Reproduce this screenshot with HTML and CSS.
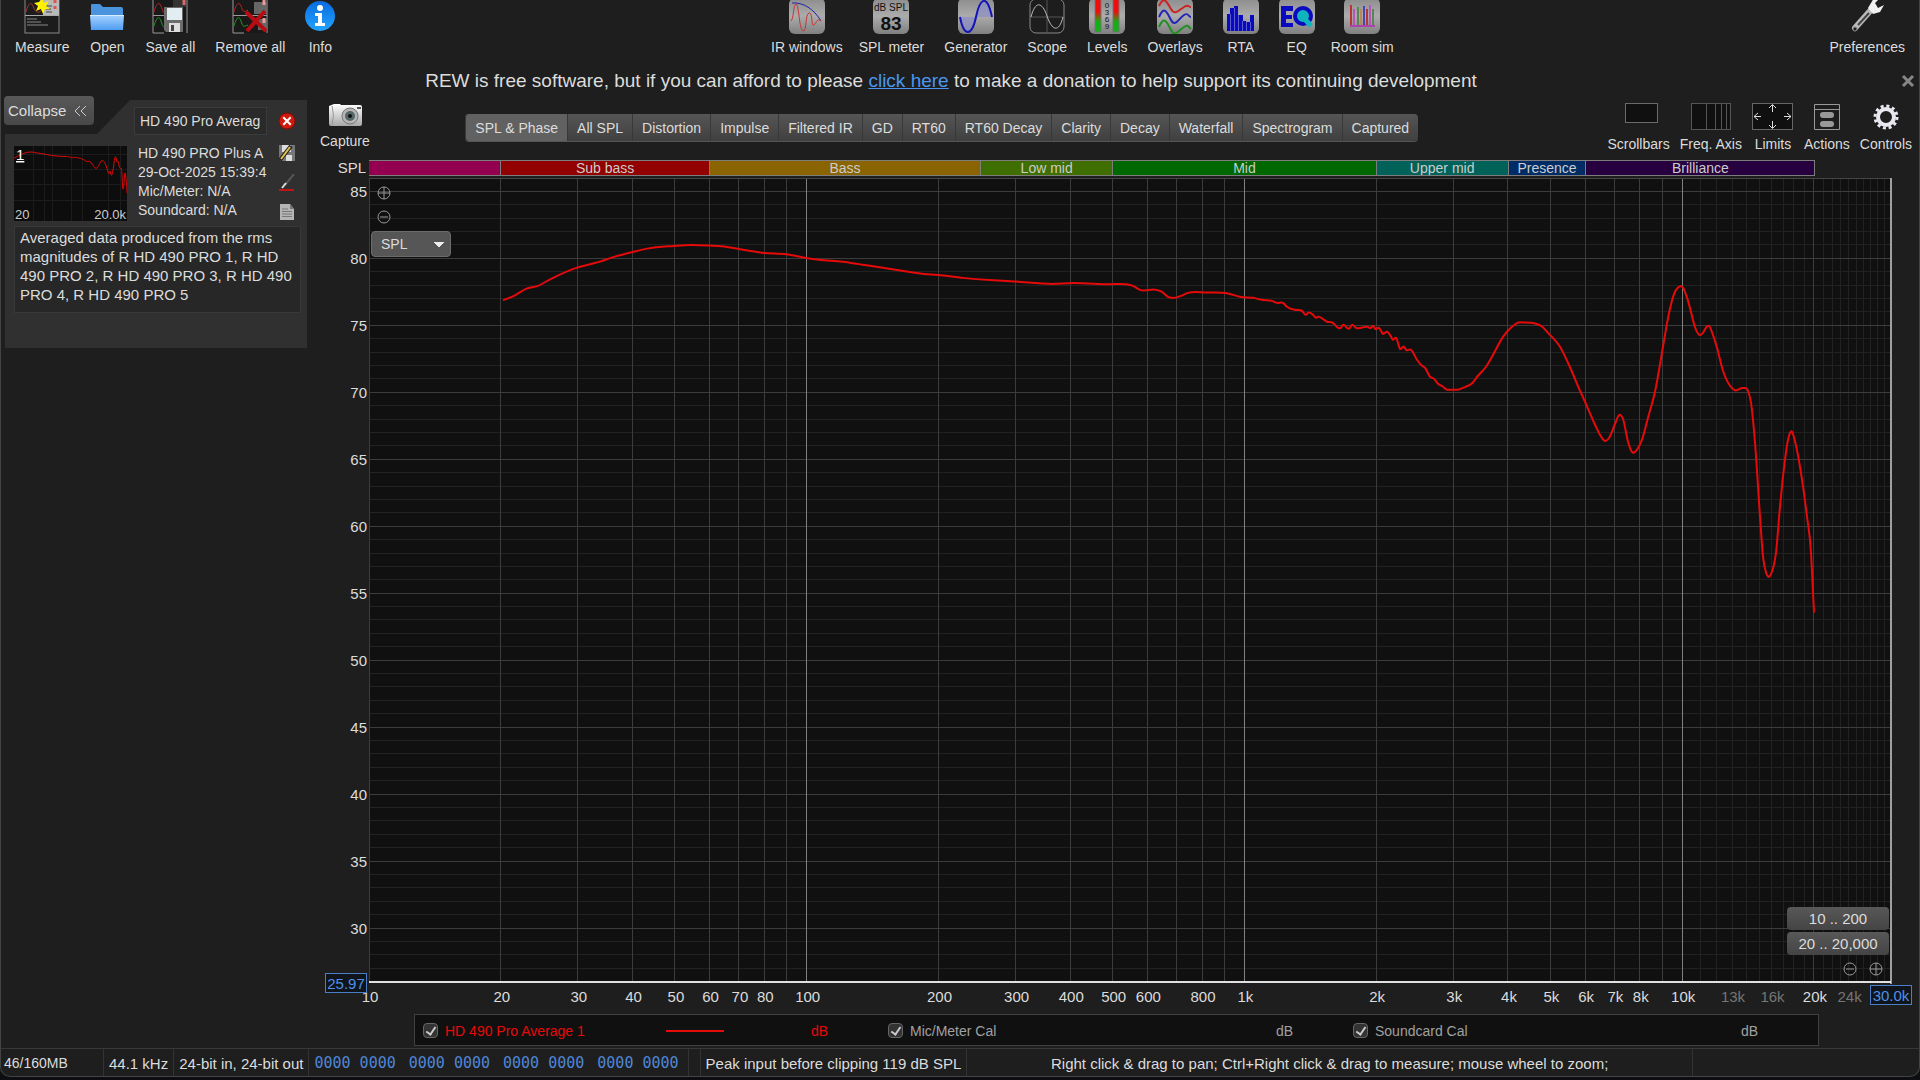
FILE: index.html
```html
<!DOCTYPE html>
<html lang="en">
<head>
    <meta charset="UTF-8">
    <meta name="viewport" content="width=device-width, initial-scale=1.0">
    <title>REW</title>
    <link rel="stylesheet" href="styles.css">
</head>
<body>
    <div class="window">
        <!-- Main toolbar -->
        <header class="toolbar">
            <div class="tool-group">
                <button class="tool">
                    <svg width="36" height="36" viewBox="0 0 36 36">
                        <rect x="1" y="0" width="34" height="35" fill="#1c1c1c" stroke="#888" />
                        <path d="M1 17.500H35" stroke="#aaa" />
                        <rect x="19" y="0" width="16" height="17" fill="#b9b9b9" />
                        <path d="M2 14C4 6 7 3 9 8S13 17 18 12" fill="none" stroke="#a33" />
                        <path d="M22 8h6M22 11h5M22 14h6" stroke="#444" />
                        <path d="M31 0v5M31 8v3" stroke="#d55" stroke-width="3" />
                        <path d="M3 21h10M3 24h14M3 27h21" stroke="#888" />
                        <path d="M18 0l2 5 5-2-3 5 4 3-5 0-2 5-2-5-5 2 2-5-4-3 5-1z" fill="#fff200" />
                    </svg>
                    Measure
                </button>
                <button class="tool">
                    <svg width="36" height="36" viewBox="0 0 36 36">
                        <defs>
                            <linearGradient id="folder" x2="0" y2="1">
                                <stop offset="0" stop-color="#a6d3ff" />
                                <stop offset="1" stop-color="#4f9df2" />
                            </linearGradient>
                        </defs>
                        <path d="M2 32V7q0-1 1-1h8l3 3h18q2 0 2 2v21z" fill="#4b93dd" />
                        <path d="M1 17h34l-1 15H2z" fill="url(#folder)" />
                        <path d="M1 17.500H35" stroke="#d3eaff" />
                    </svg>
                    Open
                </button>
                <button class="tool">
                    <svg width="36" height="36" viewBox="0 0 36 36">
                        <rect x="1" y="0" width="34" height="35" fill="#191919" />
                        <path d="M1 0V35M1 17.500H12M1 35H12M35 0V35" stroke="#999" />
                        <path d="M2 14C4 6 7 3 9 8S11 15 13 15" fill="none" stroke="#b22" />
                        <path d="M2 28C4 20 7 17 9 23S11 29 13 29" fill="none" stroke="#292" />
                        <rect x="21" y="0" width="13" height="9" fill="#333" />
                        <path d="M32 1v6" stroke="#d66" stroke-width="3" />
                        <path d="M12 9h19v25H14l-2-2z" fill="#6c6c6c" />
                        <rect x="15" y="10" width="15" height="12" fill="#e2edf2" />
                        <rect x="17" y="25" width="11" height="9" fill="#ddd" />
                        <rect x="19" y="27" width="3" height="6" fill="#444" />
                    </svg>
                    Save all
                </button>
                <button class="tool">
                    <svg width="36" height="36" viewBox="0 0 36 36">
                        <rect x="1" y="0" width="34" height="35" fill="#191919" />
                        <path d="M1 0V35M1 17.500H35M1 35H12M35 0V35" stroke="#999" />
                        <path d="M2 14C4 6 7 3 9 8S11 15 16 12" fill="none" stroke="#b22" />
                        <path d="M2 28C4 20 7 17 9 23S11 29 16 27" fill="none" stroke="#292" />
                        <path d="M22 4h13v12H22zM26 21h9v11h-9z" fill="#666" />
                        <path d="M32 1v6M32 20v5" stroke="#e99" stroke-width="3" />
                        <path d="M14 14L34 33M33 13L15 33" stroke="#b90c12" stroke-width="4" />
                    </svg>
                    Remove all
                </button>
                <button class="tool">
                    <svg width="30" height="36" viewBox="3 0 30 36">
                        <defs>
                            <linearGradient id="info" x2="0" y2="1">
                                <stop offset="0" stop-color="#0a6be0" />
                                <stop offset="1" stop-color="#22a4ff" />
                            </linearGradient>
                        </defs>
                        <circle cx="18" cy="18" r="15" fill="url(#info)" />
                        <circle cx="18" cy="10" r="3" fill="#fff" />
                        <path d="M13 15h7v10h3v3H13v-3h3v-7h-3z" fill="#fff" />
                    </svg>
                    Info
                </button>
            </div>

            <div class="tool-group">
                <button class="tool">
                    <svg width="36" height="36" viewBox="0 0 36 36">
                        <defs>
                            <linearGradient id="tile" x2="0" y2="1">
                                <stop offset="0" stop-color="#8c8c8c" />
                                <stop offset="0.500" stop-color="#acacac" />
                                <stop offset="1" stop-color="#808080" />
                            </linearGradient>
                        </defs>
                        <rect class="tile" width="36" height="36" rx="6" />
                        <path d="M3 5C14 4 25 11 32 23" fill="none" stroke="#22a" stroke-width="1" />
                        <path d="M2 23C5 20 4 7 7 6S10 32 14 33 16 16 20 15 22 30 25 27 28 20 32 23" fill="none" stroke="#c33" stroke-width="1" />
                    </svg>
                    IR windows
                </button>
                <button class="tool tool-tight">
                    <svg width="36" height="36" viewBox="0 0 36 36">
                        <rect class="tile" width="36" height="36" rx="6" />
                        <text class="tile-unit" x="18" y="13">dB SPL</text>
                        <text class="tile-level" x="18" y="32">83</text>
                    </svg>
                    SPL meter
                </button>
                <button class="tool">
                    <svg width="36" height="36" viewBox="0 0 36 36">
                        <rect class="tile" width="36" height="36" rx="6" />
                        <path d="M2 19C6 40 14 38 18 19S29-5 34 19z" fill="#8c8fc8" opacity="0.700" />
                        <path d="M2 19C6 40 14 38 18 19S29-5 34 19" fill="none" stroke="#1414b8" stroke-width="2" />
                    </svg>
                    Generator
                </button>
                <button class="tool">
                    <svg width="36" height="36" viewBox="0 0 36 36">
                        <rect x="1" y="1" width="34" height="34" rx="6" fill="#1d1d1d" stroke="#8a8a8a" />
                        <path d="M18 0V36M2 19H34" stroke="#555" />
                        <path d="M2 19C6 3 13 3 18 18S30 35 34 19" fill="none" stroke="#bbb" />
                    </svg>
                    Scope
                </button>
                <button class="tool">
                    <svg width="36" height="36" viewBox="0 0 36 36">
                        <defs>
                            <linearGradient id="meter" x2="0" y2="1">
                                <stop offset="0.400" stop-color="#f20d0d" />
                                <stop offset="0.700" stop-color="#12b012" />
                            </linearGradient>
                        </defs>
                        <rect class="tile" width="36" height="36" rx="6" />
                        <path d="M6 0h6v34H6zM24 0h6v34h-6z" fill="url(#meter)" stroke="#777" />
                        <text class="tile-scale" x="18" y="10">0</text>
                        <text class="tile-scale" x="18" y="17">3</text>
                        <text class="tile-scale" x="18" y="24">6</text>
                        <text class="tile-scale" x="18" y="31">9</text>
                    </svg>
                    Levels
                </button>
                <button class="tool">
                    <svg width="36" height="36" viewBox="0 0 36 36">
                        <rect class="tile" width="36" height="36" rx="6" />
                        <g fill="none" stroke-width="2">
                            <path d="M2 8C7-3 10 4 14 11S22 12 27 9 31 9 34 9" stroke="#cc2424" />
                            <path d="M2 19C7 7 10 14 14 22S22 20 27 17 31 19 34 19" stroke="#2424b8" />
                            <path d="M2 29C7 17 10 24 14 32S22 32 27 29 31 29 34 31" stroke="#209020" />
                        </g>
                    </svg>
                    Overlays
                </button>
                <button class="tool">
                    <svg width="36" height="36" viewBox="0 0 36 36">
                        <rect class="tile" width="36" height="36" rx="6" />
                        <path d="M4 33V16h3v-6h4V8h4v9h5v6h3v1h4v-7h4v16z" fill="#0a0abe" />
                        <path d="M7.500 16V33M11.500 10V33M15.500 17V33M19.500 23V33M23.500 24V33M27.500 24V33" stroke="#5b5bd0" />
                    </svg>
                    RTA
                </button>
                <button class="tool">
                    <svg width="36" height="36" viewBox="0 0 36 36">
                        <rect class="tile" width="36" height="36" rx="6" />
                        <path d="M2 8h12v5H7v4h6v4H7v4h7v4H2z" fill="#0a0abe" />
                        <circle cx="24" cy="18" r="8" fill="#10b4bc" stroke="#0a0abe" stroke-width="4" />
                        <path d="M25 20L32 28" stroke="#10b4bc" stroke-width="5" />
                    </svg>
                    EQ
                </button>
                <button class="tool tool-tight">
                    <svg width="36" height="36" viewBox="0 0 36 36">
                        <rect class="tile" width="36" height="36" rx="6" />
                        <g stroke-width="2">
                            <path d="M7 7V28M23 11V28" stroke="#b33" />
                            <path d="M10 11V28M26 7V28" stroke="#b5b" />
                            <path d="M14 9V28M29 11V28" stroke="#585" />
                            <path d="M17 11V28" stroke="#b85" />
                            <path d="M20 8V28" stroke="#44b" />
                            <path d="M6 28H31" stroke="#a4a" />
                        </g>
                    </svg>
                    Room sim
                </button>
            </div>

            <div class="tool-group">
                <button class="tool">
                    <svg width="36" height="36" viewBox="0 0 36 36">
                        <path d="M6 30L21 13" stroke="#b9b9b9" stroke-width="6" stroke-linecap="round" />
                        <path d="M9 27L20 15" stroke="#444" stroke-width="2" />
                        <circle cx="6" cy="31" r="2" fill="#1e1e1e" stroke="#888" />
                        <path d="M19 10L25 0h6l-5 5 3 5 6-3-4 7-7 2z" fill="#f1f1f1" />
                    </svg>
                    Preferences
                </button>
            </div>
        </header>

        <!-- Donation banner -->
        <div class="banner">
            <p>REW is free software, but if you can afford to please <a href="#">click here</a> to make a donation to help support its continuing development</p>
            <button class="banner-close" aria-label="Close">
                <svg width="14" height="14" viewBox="0 0 14 14"><path d="M2 2L12 12M12 2L2 12" stroke="#868686" stroke-width="3" /></svg>
            </button>
        </div>

        <div class="workspace">
            <!-- Measurement list -->
            <aside class="sidebar">
                <button class="collapse">
                    Collapse
                    <svg width="13" height="12" viewBox="0 0 13 12" fill="none" stroke="#ccc"><path d="M6 1L1 6l5 5M12 1L7 6l5 5" /></svg>
                </button>
                <section class="measurement">
                    <div class="measurement-head">
                        <input class="measurement-name" type="text" value="HD 490 Pro Averag" aria-label="Measurement name">
                        <button class="icon-button" aria-label="Remove">
                            <svg width="18" height="18" viewBox="0 0 18 18">
                                <circle cx="9" cy="9" r="8" fill="#d01a0e" stroke="#7d0f08" />
                                <path d="M6 6L12 12M12 6L6 12" stroke="#fff" stroke-width="2" stroke-linecap="square" />
                            </svg>
                        </button>
                    </div>
                    <div class="measurement-body">
                        <svg class="thumb" viewBox="0 0 113 75">
                            <rect width="113" height="75" fill="#0d0d0d" />
                            <path d="M19.500 0V75M30.500 0V75M38.500 0V75M57.500 0V75M68.500 0V75M94.500 0V75M106.500 0V75M0 8.500H113M0 23.500H113M0 38.500H113M0 54.500H113" stroke="#1c1c1c" />
                            <svg width="113" height="75" viewBox="501 191 1313 671" preserveAspectRatio="none">
                                <path class="trace thumb-trace" />
                            </svg>
                            <text class="thumb-number" x="2" y="14">1</text>
                            <text class="thumb-axis" x="1" y="73">20</text>
                            <text class="thumb-axis" x="112" y="73" text-anchor="end">20.0k</text>
                        </svg>
                        <div class="measurement-info">
                            <p>HD 490 PRO Plus A</p>
                            <p>29-Oct-2025 15:39:4</p>
                            <p>Mic/Meter: N/A</p>
                            <p>Soundcard: N/A</p>
                        </div>
                        <div class="measurement-actions">
                            <button class="icon-button" aria-label="Save">
                                <svg width="18" height="18" viewBox="0 0 18 18">
                                    <path d="M1 1h16v16H3l-2-2z" fill="#777" />
                                    <path d="M4 1h9v7H4zM8 11h6v6H8z" fill="#ddd" />
                                    <path d="M2 16L13 2" stroke="#222" stroke-width="4" />
                                    <path d="M3 15L12 3" stroke="#e3c04a" stroke-width="2" />
                                </svg>
                            </button>
                            <button class="icon-button" aria-label="Trace colour">
                                <svg width="18" height="18" viewBox="0 0 18 18">
                                    <path d="M7 11L16 0" stroke="#555" stroke-width="2" />
                                    <path d="M4 14L8 9" stroke="#ddd" stroke-width="2" />
                                    <rect x="1" y="15" width="15" height="2" fill="#c01414" />
                                </svg>
                            </button>
                            <button class="icon-button" aria-label="Notes">
                                <svg width="18" height="18" viewBox="0 0 18 18">
                                    <path d="M2 1h10l4 5v11H2z" fill="#b5b5b5" />
                                    <path d="M12 1v5h4" fill="#777" />
                                    <path d="M4 6h6M4 8.500h10M4 11h10M4 13.500h10" stroke="#777" />
                                </svg>
                            </button>
                        </div>
                    </div>
                    <textarea class="notes" aria-label="Notes">Averaged data produced from the rms magnitudes of R HD 490 PRO 1, R HD 490 PRO 2, R HD 490 PRO 3, R HD 490 PRO 4, R HD 490 PRO 5</textarea>
                </section>
            </aside>

            <!-- Graph -->
            <main class="graph">
                <div class="graph-bar">
                    <button class="tool capture">
                        <svg width="36" height="25" viewBox="0 0 36 25">
                            <defs>
                                <linearGradient id="camera" x2="0" y2="1">
                                    <stop offset="0" stop-color="#fff" />
                                    <stop offset="1" stop-color="#a8a8a8" />
                                </linearGradient>
                            </defs>
                            <path d="M2 3l5-2h6l1 1h19q2 0 2 2v17q0 2-2 2H4q-2 0-2-2z" fill="url(#camera)" />
                            <path d="M5 3Q8 12 5 22" fill="none" stroke="#999" />
                            <circle cx="23" cy="13" r="8" fill="#b5b5b5" stroke="#777" />
                            <circle cx="23" cy="13" r="5" fill="#566" />
                            <circle cx="23" cy="13" r="2" fill="#111" />
                            <rect x="30" y="4" width="4" height="2" fill="#555" />
                        </svg>
                        Capture
                    </button>
                    <nav class="tabs">
                        <button class="tab active">SPL &amp; Phase</button>
                        <button class="tab">All SPL</button>
                        <button class="tab">Distortion</button>
                        <button class="tab">Impulse</button>
                        <button class="tab">Filtered IR</button>
                        <button class="tab">GD</button>
                        <button class="tab">RT60</button>
                        <button class="tab">RT60 Decay</button>
                        <button class="tab">Clarity</button>
                        <button class="tab">Decay</button>
                        <button class="tab">Waterfall</button>
                        <button class="tab">Spectrogram</button>
                        <button class="tab">Captured</button>
                    </nav>
                    <div class="graph-tools">
                        <button class="tool">
                            <svg width="40" height="28" viewBox="0 0 40 28"><rect x="6.500" y="0.500" width="32" height="19" fill="#101010" stroke="#6a6a6a" /></svg>
                            Scrollbars
                        </button>
                        <button class="tool">
                            <svg width="40" height="28" viewBox="0 0 40 28">
                                <rect x="0.500" y="0.500" width="39" height="26" fill="#101010" stroke="#555" />
                                <path d="M15.500 1V27M24.500 1V27M30.500 1V27M35.500 1V27" stroke="#555" />
                            </svg>
                            Freq. Axis
                        </button>
                        <button class="tool">
                            <svg width="42" height="28" viewBox="0 0 42 28" fill="none">
                                <rect x="0.500" y="0.500" width="40" height="26" fill="#101010" stroke="#666" />
                                <path d="M20.500 9V2M17 5l3.500-3.500L24 5M20.500 18v7M17 22l3.500 3.500L24 22M9 13.500H2M6 10l-4 3.500L6 17M32 13.500h7M35 10l4 3.500-4 3.500" stroke="#ddd" />
                            </svg>
                            Limits
                        </button>
                        <button class="tool">
                            <svg width="28" height="28" viewBox="0 0 28 28">
                                <path d="M1.500 1.500H26.500V26.500H1.500zM1.500 6.500H26.500" fill="none" stroke="#999" />
                                <rect x="7" y="9" width="14" height="6" rx="3" fill="#999" />
                                <rect x="7" y="18" width="14" height="6" rx="3" fill="#999" />
                            </svg>
                            Actions
                        </button>
                        <button class="tool">
                            <svg width="28" height="28" viewBox="0 0 28 28" fill="none" stroke="#e8e8f0">
                                <circle cx="14" cy="14" r="8" stroke-width="4" />
                                <circle cx="14" cy="14" r="11" stroke-width="3" stroke-dasharray="3 2.760" />
                            </svg>
                            Controls
                        </button>
                    </div>
                </div>

                <div class="band-row">
                    <span class="axis-title">SPL</span>
                    <div class="bands" id="bands"></div>
                </div>

                <div class="chart" id="chart">
                    <svg class="plot" id="plot"></svg>
                    <div class="axis-controls">
                        <button class="zoom-button" aria-label="Zoom in vertically">
                            <svg width="14" height="14" viewBox="0 0 14 14"><circle cx="7" cy="7" r="6" /><path d="M1 7H13M7 1V13" /></svg>
                        </button>
                        <button class="zoom-button" aria-label="Zoom out vertically">
                            <svg width="14" height="14" viewBox="0 0 14 14"><circle cx="7" cy="7" r="6" /><path d="M3 7H11" /></svg>
                        </button>
                        <select class="axis-select" aria-label="Left axis">
                            <option>SPL</option>
                        </select>
                    </div>
                    <div class="range-controls">
                        <button class="range">10 .. 200</button>
                        <button class="range">20 .. 20,000</button>
                        <div class="range-zoom">
                            <button class="zoom-button" aria-label="Zoom out horizontally">
                                <svg width="14" height="14" viewBox="0 0 14 14"><circle cx="7" cy="7" r="6" /><path d="M3 7H11" /></svg>
                            </button>
                            <button class="zoom-button" aria-label="Zoom in horizontally">
                                <svg width="14" height="14" viewBox="0 0 14 14"><circle cx="7" cy="7" r="6" /><path d="M1 7H13M7 1V13" /></svg>
                            </button>
                        </div>
                    </div>
                    <input class="limit limit-low" type="text" value="25.97" aria-label="Lowest level">
                    <input class="limit limit-high" type="text" value="30.0k" aria-label="Highest frequency">
                </div>

                <div class="legend">
                    <div class="legend-item legend-main">
                        <input type="checkbox" id="trace1" checked>
                        <label for="trace1">HD 490 Pro Average 1</label>
                        <span class="legend-line"></span>
                        <span class="legend-unit">dB</span>
                    </div>
                    <div class="legend-item">
                        <input type="checkbox" id="trace2" checked>
                        <label for="trace2">Mic/Meter Cal</label>
                        <span class="legend-unit">dB</span>
                    </div>
                    <div class="legend-item">
                        <input type="checkbox" id="trace3" checked>
                        <label for="trace3">Soundcard Cal</label>
                        <span class="legend-unit">dB</span>
                    </div>
                </div>
            </main>
        </div>

        <!-- Status bar -->
        <footer class="status">
            <span class="cell cell-memory">46/160MB</span>
            <span class="cell">44.1 kHz</span>
            <span class="cell">24-bit in, 24-bit out</span>
            <span class="cell bits">
                <span>0000 0000</span>
                <span>0000 0000</span>
                <span>0000 0000</span>
                <span>0000 0000</span>
            </span>
            <span class="cell cell-empty"></span>
            <span class="cell cell-peak">Peak input before clipping 119 dB SPL</span>
            <span class="cell cell-hint">Right click &amp; drag to pan; Ctrl+Right click &amp; drag to measure; mouse wheel to zoom;</span>
            <span class="cell-rest"></span>
        </footer>
    </div>

    <script src="app.js"></script>
</body>
</html>
```

FILE: styles.css
```css
* {
    margin: 0;
    padding: 0;
    box-sizing: border-box;
}

body {
    background-color: #0c0e12;
    color: #dcdcdc;
    font-family: "Liberation Sans", Arial, sans-serif;
    font-size: 15px;
    height: 100vh;
    padding-bottom: 3px;
}

button, input, select, textarea {
    font: inherit;
    color: inherit;
}

button {
    background: none;
    border: none;
}

.window {
    height: 100%;
    display: flex;
    flex-direction: column;
    overflow: hidden;
    background-color: #1e1e1e;
    border: 1px solid #444;
    border-top: none;
    border-radius: 0 0 10px 10px;
}

/* Toolbar */
.toolbar {
    height: 60px;
    display: flex;
    justify-content: space-between;
    padding: 0 4px;
}

.tool-group {
    display: flex;
}

.tool {
    display: flex;
    flex-direction: column;
    align-items: center;
    gap: 4px;
    padding: 0 10px;
    font-size: 14px;
    line-height: 18px;
    white-space: nowrap;
}

.tool-tight {
    padding: 0 10px 0 6px;
}

.toolbar .tool svg {
    margin-top: -2px;
}

.tile {
    fill: url(#tile);
}

.tile-unit,
.tile-level,
.tile-scale {
    fill: #111;
    text-anchor: middle;
    font-size: 10px;
}

.tile-level {
    font-size: 19px;
    font-weight: bold;
}

.tile-scale {
    font-size: 8px;
}

/* Donation banner */
.banner {
    height: 36px;
    display: flex;
    align-items: center;
    padding: 6px 4px 0 0;
    font-size: 19px;
}

.banner p {
    flex: 1;
    text-align: center;
}

.banner a {
    color: #4a96f0;
}

.banner-close {
    display: flex;
}

/* Layout */
.workspace {
    flex: 1;
    min-height: 0;
    display: flex;
}

.sidebar {
    width: 319px;
    padding: 4px 13px 0 4px;
    position: relative;
}

.collapse {
    position: absolute;
    top: 0;
    left: 3px;
    z-index: 1;
    display: flex;
    align-items: center;
    gap: 8px;
    height: 29px;
    padding: 0 7px 0 4px;
    border-radius: 4px;
    background: linear-gradient(#585858, #484848);
}

/* Measurement card */
.measurement {
    background-color: #303030;
    clip-path: polygon(0 34px, 92px 34px, 125px 0, 100% 0, 100% 100%, 0 100%);
    padding: 7px 6px 35px 9px;
}

.measurement-head {
    display: flex;
    justify-content: flex-end;
    align-items: center;
    gap: 11px;
    padding-right: 5px;
    margin-bottom: 9px;
}

.measurement-name {
    width: 133px;
    height: 28px;
    padding: 0 5px;
    font-size: 14px;
    background-color: #2a2a2a;
    border: 1px solid #3b3b3b;
}

.icon-button {
    display: block;
    width: 18px;
    height: 18px;
}

.measurement-body {
    display: flex;
    gap: 11px;
    padding-right: 5px;
}

.thumb {
    width: 113px;
    height: 75px;
    margin-top: 2px;
    overflow: visible;
    flex: none;
}

.trace {
    fill: none;
    stroke: #e60a0a;
    stroke-width: 2;
    stroke-linejoin: round;
    vector-effect: non-scaling-stroke;
}

.thumb-trace {
    stroke-width: 1;
}

.thumb-number {
    fill: #fff;
    font-size: 15px;
    text-decoration: underline;
}

.thumb-axis {
    fill: #ccc;
    font-size: 13px;
}

.measurement-info {
    flex: 1;
    min-width: 0;
    height: 77px;
    font-size: 14px;
    line-height: 19px;
}

.measurement-info p {
    overflow: hidden;
    white-space: nowrap;
}

.measurement-actions {
    display: flex;
    flex-direction: column;
    justify-content: space-between;
}

.notes {
    display: block;
    width: 100%;
    height: 87px;
    margin-top: 5px;
    padding: 1px 5px;
    line-height: 19px;
    background-color: #272727;
    border: 1px solid #383838;
    resize: none;
    outline: none;
    overflow: hidden;
}

/* Graph header */
.graph {
    flex: 1;
    min-width: 0;
    display: flex;
    flex-direction: column;
}

.graph-bar {
    display: flex;
    align-items: flex-start;
    height: 64px;
    padding: 7px 7px 0 0;
}

.graph-bar .tool {
    padding: 0;
}

.tabs {
    display: flex;
    margin: 11px auto 0 6%;
    border-radius: 4px;
    background: linear-gradient(#555, #404040);
    box-shadow: 0 1px 0 #555;
}

.tab {
    height: 27px;
    padding: 0 9px;
    font-size: 14px;
    white-space: nowrap;
    border-left: 1px solid #383838;
}

.tab.active {
    background-color: #616161;
    border-radius: 4px 0 0 4px;
}

.graph-tools {
    display: flex;
    gap: 10px;
}

/* Frequency bands */
.band-row {
    display: flex;
    height: 16px;
    padding-right: 27px;
    line-height: 15px;
}

.axis-title {
    width: 49px;
    padding-right: 3px;
    text-align: right;
}

.bands {
    flex: 1;
    display: flex;
}

.band {
    flex-basis: 0;
    min-width: 0;
    overflow: hidden;
    text-align: center;
    line-height: 14px;
    font-size: 14px;
    color: #ccc;
    border: 1px solid #7d7d7d;
    border-left: none;
}

.band-infra { background-color: #930050; }
.band-sub { background-color: #930000; }
.band-bass { background-color: #8a6400; }
.band-lowmid { background-color: #3f6f00; }
.band-mid { background-color: #006800; }
.band-uppermid { background-color: #006258; }
.band-presence { background-color: #002c66; }
.band-brilliance { background-color: #26003f; }

.band-none {
    border: none;
}

/* Chart */
.chart {
    flex: 1;
    min-height: 0;
    position: relative;
}

.plot {
    display: block;
    width: 100%;
    height: 100%;
}

.plot-area {
    fill: #101010;
}

.grid-minor { stroke: #222; }
.grid-major { stroke: #3c3c3c; }
.grid-decade { stroke: #808080; }
.frame { stroke: #444; }
.frame-right { stroke: #a0a0a0; stroke-width: 2; }
.frame-bottom { stroke: #e0e0e0; stroke-width: 2; }

.axis-label {
    fill: #dcdcdc;
    font-size: 15px;
}

.axis-label-dim {
    fill: #757575;
}

.axis-controls {
    position: absolute;
    top: 10px;
    left: 51px;
    display: flex;
    flex-direction: column;
    gap: 10px;
}

.zoom-button {
    width: 14px;
    height: 14px;
    margin-left: 6px;
}

.zoom-button svg {
    display: block;
    fill: none;
    stroke: #999;
}

.axis-select {
    width: 80px;
    height: 26px;
    margin-top: -3px;
    padding: 0 9px;
    appearance: none;
    font-size: 14px;
    border: 1px solid #6c6c6c;
    border-radius: 4px;
    background: linear-gradient(to bottom right, #eee 50%, transparent 50%) 67px 10px / 5px 6px no-repeat,
        linear-gradient(to bottom left, #eee 50%, transparent 50%) 62px 10px / 5px 6px no-repeat,
        #565656;
}

.range-controls {
    position: absolute;
    right: 30px;
    bottom: 32px;
    width: 102px;
    display: flex;
    flex-direction: column;
    gap: 2px;
}

.range {
    height: 23px;
    border-radius: 4px;
    background: linear-gradient(#585858, #444);
}

.range-zoom {
    display: flex;
    justify-content: flex-end;
    gap: 6px;
    padding: 5px 6px 0 0;
}

.limit {
    position: absolute;
    width: 42px;
    height: 20px;
    text-align: center;
    color: #4f90e8;
    background-color: #10151c;
    border: 1px solid #4a7fc8;
}

.limit-low {
    left: 5px;
    bottom: 15px;
}

.limit-high {
    right: 7px;
    bottom: 3px;
}

/* Legend */
.legend {
    display: grid;
    grid-template-columns: repeat(3, 1fr);
    height: 32px;
    margin: 6px 100px 0 94px;
    padding: 1px 8px 0 0;
    background-color: #101010;
    border: 1px solid #404040;
    font-size: 14px;
}

.legend-item {
    display: flex;
    align-items: center;
    padding: 0 52px 0 8px;
    color: #a0a0a0;
}

.legend-item input {
    appearance: none;
    width: 15px;
    height: 15px;
    margin-right: 7px;
    border: 1px solid #666;
    border-radius: 4px;
    background-color: #333;
    display: grid;
    place-items: center;
}

.legend-item input:checked::before {
    content: "";
    width: 4px;
    height: 8px;
    margin-top: -2px;
    border: solid #ccc;
    border-width: 0 2px 2px 0;
    transform: rotate(35deg);
}

.legend-main {
    color: #e60a0a;
}

.legend-line {
    width: 58px;
    height: 2px;
    margin-left: auto;
    margin-right: 87px;
    background-color: #e60a0a;
}

.legend-unit {
    margin-left: auto;
}

.legend-line + .legend-unit {
    margin-left: 0;
}

/* Status bar */
.status {
    display: flex;
    height: 28px;
    margin-top: 2px;
    border-top: 1px solid #383838;
    line-height: 29px;
    white-space: nowrap;
}

.cell {
    padding: 0 5px;
    border-right: 1px solid #333;
}

.cell-memory {
    width: 103px;
    padding-left: 3px;
    font-size: 14px;
}

.bits {
    display: flex;
    gap: 13px;
    padding-right: 9px;
    font-family: "DejaVu Sans Mono", monospace;
    color: #4f86d8;
}

.cell-empty {
    width: 12px;
}

.cell-hint {
    flex: 1;
    text-align: center;
}

.cell-rest {
    width: 226px;
}
```

FILE: app.js
```js
const FREQ_MIN = 10;
const FREQ_MAX = 30000;
const SPL_MIN = 25.97;
const SPL_MAX = 86;

const bands = [
    { name: '', type: 'infra', from: 10, to: 20 },
    { name: 'Sub bass', type: 'sub', from: 20, to: 60 },
    { name: 'Bass', type: 'bass', from: 60, to: 250 },
    { name: 'Low mid', type: 'lowmid', from: 250, to: 500 },
    { name: 'Mid', type: 'mid', from: 500, to: 2000 },
    { name: 'Upper mid', type: 'uppermid', from: 2000, to: 4000 },
    { name: 'Presence', type: 'presence', from: 4000, to: 6000 },
    { name: 'Brilliance', type: 'brilliance', from: 6000, to: 20000 },
    { name: '', type: 'none', from: 20000, to: 30000 }
];

const freqLabels = [10, 20, 30, 40, 50, 60, 70, 80, 100, 200, 300, 400, 500, 600, 800, 1000,
    2000, 3000, 4000, 5000, 6000, 7000, 8000, 10000, 13000, 16000, 20000, 24000];
const dimLabels = [13000, 16000, 24000];

// Trace points, in the units of TRACE_BOX
const TRACE_BOX = '369 178 1522 805';
const trace = [
    [503, 300.5], [514, 296], [526, 289], [538, 286], [551, 279], [577, 267.7], [599, 262], [614, 257],
    [632, 252.3], [647, 248.7], [674, 246], [691, 245], [710, 245.7], [727, 247], [740, 249.3], [764, 253],
    [786, 254.3], [806, 258], [851, 263], [878, 267], [924, 274], [938, 275], [963, 278], [1016, 281.7],
    [1055, 284], [1069, 283.3], [1110, 284.3], [1125, 284.3], [1133, 286], [1140, 290], [1156, 290],
    [1162, 292], [1168, 297], [1172, 298], [1181, 296], [1188, 293], [1207, 292.7], [1228, 293.7],
    [1233, 295], [1240, 297], [1253, 298], [1262, 300], [1272, 301], [1277, 303], [1283, 303],
    [1287, 307], [1295, 310], [1302, 311], [1306, 315], [1308, 313], [1313, 315], [1316, 318],
    [1318, 317], [1327, 322], [1333, 323], [1338, 328], [1341, 328], [1343, 325], [1347, 328],
    [1349, 329], [1352, 325], [1356, 328], [1367, 327], [1371, 328], [1373, 326], [1375, 329],
    [1379, 328], [1383, 334], [1387, 332], [1390, 335], [1393, 340], [1396, 338], [1400, 349],
    [1404, 347], [1406, 350], [1411, 350], [1417, 360], [1422, 366], [1425, 368], [1430, 377],
    [1434, 379], [1438, 384], [1443, 387], [1447, 390], [1450, 390], [1459, 389.7], [1465, 387.3],
    [1472, 383.7], [1478, 376], [1486, 367], [1492, 357], [1503, 337], [1512, 327], [1517, 323.3],
    [1525, 322.7], [1535, 323.7], [1542, 326.7], [1548, 333], [1560, 347], [1568, 363], [1580, 391],
    [1585, 402], [1595, 425], [1602, 438.3], [1605, 441.3], [1609, 438.3], [1615, 424.3], [1619, 415.3],
    [1623, 419.3], [1628, 442], [1632, 452.3], [1637, 450], [1642, 440], [1648, 418], [1655, 392],
    [1663, 347], [1668, 318.3], [1674, 294.3], [1678, 287.7], [1683, 287.7], [1688, 301], [1696, 330],
    [1700, 335.3], [1703, 333], [1707, 326.5], [1709, 326], [1713, 335.3], [1717, 348], [1723, 371],
    [1730, 386], [1735, 390.5], [1743, 388.3], [1748, 391], [1751, 403], [1755, 443], [1760, 517],
    [1763, 557], [1766, 573], [1768, 577], [1772, 572], [1776, 553], [1780, 507], [1785, 460],
    [1788, 440], [1792, 432], [1795, 441.7], [1802, 480], [1807, 517], [1811, 553], [1813, 593],
    [1814, 613]
];

const MARGIN = { left: 49, right: 28, top: 2, bottom: 26 };

const plot = document.getElementById('plot');

// Colour bands over the plot
function drawBands() {
    const row = document.getElementById('bands');
    bands.forEach(band => {
        const el = document.createElement('span');
        el.className = `band band-${band.type}`;
        el.style.flexGrow = Math.log10(band.to / band.from);
        el.textContent = band.name;
        row.appendChild(el);
    });
}

// Slope at a point, weighted by the distance to each neighbour
function slopeAt(points, i) {
    const p = points[i];
    const before = points[i - 1];
    const after = points[i + 1];
    const s0 = before ? (p[1] - before[1]) / (p[0] - before[0]) : null;
    const s1 = after ? (after[1] - p[1]) / (after[0] - p[0]) : null;
    if (s0 === null) return s1;
    if (s1 === null) return s0;
    const h0 = p[0] - before[0];
    const h1 = after[0] - p[0];
    return (s0 * h1 + s1 * h0) / (h0 + h1);
}

// Smooth curve through the points
function tracePath(points) {
    let d = `M${points[0]}`;
    for (let i = 0; i < points.length - 1; i++) {
        const [x1, y1] = points[i];
        const [x2, y2] = points[i + 1];
        const dx = (x2 - x1) / 3;
        d += `C${x1 + dx} ${y1 + dx * slopeAt(points, i)} ${x2 - dx} ${y2 - dx * slopeAt(points, i + 1)} ${x2} ${y2}`;
    }
    return d;
}

function line(x1, y1, x2, y2, type) {
    return `<line x1="${x1}" y1="${y1}" x2="${x2}" y2="${y2}" class="${type}" />`;
}

function drawPlot() {
    const left = MARGIN.left;
    const top = MARGIN.top;
    const right = plot.clientWidth - MARGIN.right;
    const bottom = plot.clientHeight - MARGIN.bottom;
    const width = right - left;
    const height = bottom - top;
    const snap = v => Math.floor(v) + 0.5;
    const freqX = f => left + width * Math.log10(f / FREQ_MIN) / Math.log10(FREQ_MAX / FREQ_MIN);
    const splY = s => top + height * (SPL_MAX - s) / (SPL_MAX - SPL_MIN);

    let minor = '';
    let major = '';
    let labels = '';

    for (let s = 26; s < SPL_MAX; s++) {
        const y = snap(splY(s));
        if (s % 5 === 0) {
            major += line(left, y, right, y, 'grid-major');
            labels += `<text x="${left - 2}" y="${y + 5}" text-anchor="end" class="axis-label">${s}</text>`;
        } else {
            minor += line(left, y, right, y, 'grid-minor');
        }
    }

    for (let step = 10; step <= 10000; step *= 10) {
        for (let f = step; f < step * 10 && f < FREQ_MAX; f += step === 10000 ? 1000 : step) {
            const x = snap(freqX(f));
            if (f === step && f > 10) {
                major += line(x, top, x, bottom, 'grid-decade');
            } else if (f % step === 0) {
                major += line(x, top, x, bottom, 'grid-major');
            } else {
                minor += line(x, top, x, bottom, 'grid-minor');
            }
        }
    }

    freqLabels.forEach(f => {
        const type = dimLabels.includes(f) ? 'axis-label axis-label-dim' : 'axis-label';
        const text = f < 1000 ? f : `${f / 1000}k`;
        labels += `<text x="${freqX(f) + 1}" y="${bottom + 20}" text-anchor="middle" class="${type}">${text}</text>`;
    });

    plot.innerHTML = `
        <rect x="${left}" y="${top}" width="${width}" height="${height}" class="plot-area" />
        ${minor}${major}
        ${line(left, top + 0.5, right, top + 0.5, 'frame')}
        ${line(right, top, right, bottom + 2, 'frame-right')}
        ${line(left, bottom, right, bottom, 'frame-bottom')}
        <svg x="${left}" y="${top}" width="${width}" height="${height}" viewBox="${TRACE_BOX}" preserveAspectRatio="none">
            <path class="trace" d="${tracePath(trace)}" />
        </svg>
        ${labels}`;
}

drawBands();
document.querySelector('.thumb-trace').setAttribute('d', tracePath(trace));
drawPlot();
window.addEventListener('resize', drawPlot);
```
